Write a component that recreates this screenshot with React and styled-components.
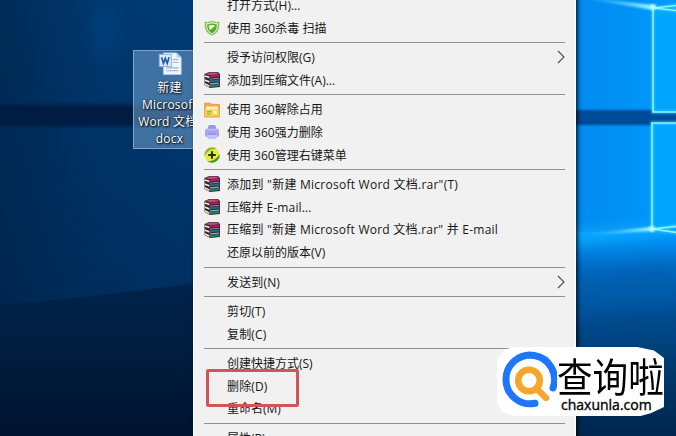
import React from 'react';
import styled, { createGlobalStyle } from 'styled-components';

const GlobalStyle = createGlobalStyle`
    body {
        margin: 0;
        overflow: hidden;
        font-family: "Open Sans", "Noto Sans CJK SC", sans-serif;
    }
`;

const Desktop = styled.div`
    position: relative;
    width: 676px;
    height: 436px;
    overflow: hidden;
    background: #002a5c;
`;

const WallpaperSvg = styled.svg`
    position: absolute;
    inset: 0;
`;

const FileIcon = styled.div`
    position: absolute;
    left: 133px;
    top: 50px;
    width: 73px;
    height: 99px;
    box-sizing: border-box;
    padding-top: 1px;
    display: flex;
    flex-direction: column;
    align-items: center;
    background: rgba(105, 154, 198, 0.6);
    border: 1px solid #7fa5c9;
`;

const FileName = styled.div`
    margin-top: 5px;
    color: #fff;
    font-size: 12px;
    line-height: 16.9px;
    letter-spacing: 0.2px;
    text-align: center;
    white-space: pre;
    text-shadow: 1px 1px 2px #000, 0 0 2px #0a2440;
`;

const Menu = styled.div`
    position: absolute;
    left: 193px;
    top: -10px;
    width: 383px;
    height: 460px;
    box-sizing: border-box;
    padding: 4px 9px 0 8px;
    background: #f1f1f1;
    border: solid #fafafa;
    border-width: 0 2px 0 1px;
    box-shadow: 2px 1px 4px rgba(0, 0, 0, 0.75);
`;

const MenuRow = styled.div`
    display: flex;
    align-items: center;
    height: 22.6px;
`;

const IconSlot = styled.div`
    width: 20px;
    height: 18px;
    margin-right: 5px;
    display: flex;
    align-items: center;
    justify-content: center;
    flex: none;
`;

const Label = styled.span`
    flex: 1;
    padding-top: 1.4px;
    color: #171717;
    font-size: 12px;
    line-height: 20px;
    letter-spacing: ${props => props.$spacing || '0'};
    white-space: pre;
`;

const Separator = styled.div`
    height: 7px;
    padding: 3px 0 3px 2px;
    box-sizing: border-box;

    &::before {
        content: '';
        display: block;
        height: 1px;
        background: #929292;
    }
`;

const Highlight = styled.div`
    position: absolute;
    left: 206px;
    top: 369px;
    width: 93px;
    height: 38px;
    box-sizing: border-box;
    border: 3px solid #d25459;
    border-radius: 2px;
`;

const Badge = styled.div`
    position: absolute;
    left: 497px;
    top: 347px;
    width: 167px;
    height: 69px;
    display: flex;
    background: #fff;
    clip-path: polygon(4% 5%, 9% 0, 84% 0, 94% 5%, 100% 16%, 100% 87%, 92% 96%, 86% 100%, 11% 100%, 3% 94%, 0 80%, 0 18%);
`;

const BadgeText = styled.div`
    display: flex;
    flex-direction: column;
    width: 107px;
    color: #000;
`;

const BadgeTitle = styled.div`
    height: 41px;
    margin-top: 8px;
    font-family: "Noto Sans CJK SC", sans-serif;
    font-size: 40px;
    font-weight: 400;
    line-height: 41px;
    white-space: nowrap;
    transform: scaleX(0.89);
    transform-origin: left center;
`;

const BadgeSite = styled.div`
    margin: 1px 0 0 4px;
    font-size: 14px;
    font-weight: 500;
    line-height: 16px;
    letter-spacing: 0;
    -webkit-text-stroke: 0.35px #000;
`;

function Wallpaper() {
    return (
        <WallpaperSvg width="676" height="436" viewBox="0 0 676 436">
            <defs>
                <linearGradient id="left" x1="0" y1="0" x2="1" y2="0">
                    <stop offset="0" stopColor="#002c58" />
                    <stop offset="0.5" stopColor="#00386e" />
                    <stop offset="1" stopColor="#003c77" />
                </linearGradient>
                <linearGradient id="leftFade" x1="0" y1="0" x2="0" y2="1">
                    <stop offset="0" stopColor="#001c40" stopOpacity="0" />
                    <stop offset="1" stopColor="#001c40" stopOpacity="0.4" />
                </linearGradient>
                <linearGradient id="floor" x1="0" y1="0" x2="0" y2="1">
                    <stop offset="0" stopColor="#00234b" />
                    <stop offset="1" stopColor="#001430" />
                </linearGradient>
                <linearGradient id="band" x1="0" y1="0" x2="0" y2="1">
                    <stop offset="0" stopColor="#001c43" stopOpacity="0" />
                    <stop offset="0.2" stopColor="#001c43" />
                    <stop offset="0.8" stopColor="#001c43" />
                    <stop offset="1" stopColor="#001c43" stopOpacity="0" />
                </linearGradient>
                <linearGradient id="sky" x1="0" y1="0" x2="1" y2="0">
                    <stop offset="0" stopColor="#008aee" />
                    <stop offset="1" stopColor="#0298fc" />
                </linearGradient>
                <linearGradient id="below" x1="0" y1="0" x2="0" y2="1">
                    <stop offset="0" stopColor="#009bff" />
                    <stop offset="0.07" stopColor="#0088ea" />
                    <stop offset="0.19" stopColor="#0067bd" />
                    <stop offset="0.42" stopColor="#004b8f" />
                    <stop offset="0.7" stopColor="#003768" />
                    <stop offset="1" stopColor="#002650" />
                </linearGradient>
                <linearGradient id="ray" x1="0" y1="0" x2="1" y2="0">
                    <stop offset="0" stopColor="#16a9ff" stopOpacity="0.2" />
                    <stop offset="1" stopColor="#9dfcff" />
                </linearGradient>
                <filter id="soft"><feGaussianBlur stdDeviation="1" /></filter>
                <filter id="haze" x="-1" y="-1" width="3" height="3"><feGaussianBlur stdDeviation="7" /></filter>
            </defs>
            <rect width="200" height="436" fill="url(#left)" />
            <rect width="200" height="305" fill="url(#leftFade)" />
            <ellipse cx="105" cy="30" rx="14" ry="30" fill="#005093" opacity="0.3" filter="url(#haze)" />
            <rect y="102" width="200" height="27" fill="url(#band)" />
            <path d="M0 305 L75 298 L200 283 V436 H0Z" fill="url(#floor)" />
            <rect x="570" width="106" height="240" fill="url(#sky)" />
            <rect x="560" y="110" width="130" height="15" fill="#004c97" filter="url(#soft)" />
            <rect x="570" y="232" width="106" height="204" fill="url(#below)" />
            <path d="M570 283 L676 258 V300 L570 320Z" fill="#005eac" opacity="0.35" filter="url(#haze)" />
            <path d="M570 231 L651 226 L676 232 L570 244Z" fill="#14b4ff" opacity="0.7" filter="url(#haze)" />
            <path d="M653 8 L676 5 V113 H653Z M652 123 H676 V228 L652 229Z" fill="#00a5ff" />
            <path d="M570 -4 L653 5 V10Z" fill="url(#ray)" filter="url(#soft)" />
            <path d="M570 236 L651 227 V231Z" fill="url(#ray)" filter="url(#soft)" />
            <path
                d="M680 5 L653 8 V112 H680 M680 123 H652 V229 L680 226 M652 229 L680 233 M653 8 L680 11"
                fill="none" stroke="#32cfff" strokeWidth="4" opacity="0.6" filter="url(#soft)"
            />
            <path
                d="M680 5 L653 8 V112 H680 M680 123 H652 V229 L680 226 M652 229 L680 233 M653 8 L680 11"
                fill="none" stroke="#8cf4f8" strokeWidth="1.6"
            />
            <circle cx="652" cy="229" r="3" fill="#c5ffff" filter="url(#soft)" />
            <circle cx="653" cy="7" r="3" fill="#c5ffff" filter="url(#soft)" />
        </WallpaperSvg>
    );
}

function WordIcon() {
    return (
        <svg width="26" height="25" viewBox="0 0 26 25">
            <path d="M6 1H20L25 6V24H6Z" fill="#eef5fd" stroke="#b9d0ea" strokeWidth="0.7" />
            <path d="M20 1V6H25Z" fill="#b9d1ec" />
            <path d="M16 8H22M16 11H22M9 17H22M9 20H22" stroke="#94b3db" strokeWidth="1.2" />
            <rect x="1.5" y="2.5" width="13" height="13" fill="#dceafb" stroke="#8db4e2" />
            <path d="M4 5.5L6 12.2L8 6.8L10 12.2L12 5.5" fill="none" stroke="#1f5cae" strokeWidth="1.8" />
        </svg>
    );
}

// three stacked books, spines to the right
function RarIcon() {
    return (
        <svg width="17" height="16" viewBox="0 0 17 16">
            <path d="M0.5 2L5 0H14L16 2V15L6 16L0.5 13Z" fill="#3a2430" />
            <path d="M1.5 2L5 .6H13.2L15 2.2L6 3.2Z" fill="#c14a78" />
            <path d="M6 3.6L15.5 2.8V4.8L6 5.6Z" fill="#a81f5c" />
            <path d="M6 8.2L15.5 7.4V9.4L6 10.4Z" fill="#28628f" />
            <path d="M6 6.8L15 6V6.8L6 7.6Z" fill="#8fb0cf" />
            <path d="M6 12.8L15.5 12V14.2L6 15.2Z" fill="#178069" />
            <path d="M6 11.6L15 10.6V11.4L6 12.4Z" fill="#8cc7b4" />
            <path d="M.8 3.2L5.4 4.6V6.3L.8 4.8ZM.8 7.2L5.4 9V10.7L.8 8.9ZM.8 11L5.4 13.2V14.9L.8 12.7Z" fill="#f3ece6" />
        </svg>
    );
}

function ShieldIcon() {
    return (
        <svg width="16" height="16" viewBox="0 0 16 16">
            <path d="M8 .5C10 2 13 2 15.3 1.8C15.8 8 14.5 13 8 15.6C1.5 13 .2 8 .7 1.8C3 2 6 2 8 .5Z" fill="#8cc45c" />
            <path d="M8 2C10 3 12 3.2 14 3.1C14 8.3 12.8 12 8 14.2C3.2 12 2 8.3 2 3.1C4 3.2 6 3 8 2Z" fill="#d8edaf" />
            <path d="M8 3.6L12.8 4.4C12.7 8.5 11.5 11.2 8 13.2C4.5 11.2 3.3 8.5 3.2 4.4Z" fill="#56a532" />
            <path d="M4.6 5.4L8 4.8L11 5.6C10.5 7.5 8 8 6.4 10C5.2 9 4.7 7.2 4.6 5.4Z" fill="#edf8d5" />
        </svg>
    );
}

function FolderIcon() {
    return (
        <svg width="16" height="16" viewBox="0 0 16 16">
            <path d="M.7 1.2H6.5L8 2.4H15.3V15H.7Z" fill="#f3a94e" stroke="#e0913e" strokeWidth="0.8" />
            <path d="M2 4.5H14V8H2Z" fill="#fff0b4" />
            <path d="M1 7.5H15V14.4H1Z" fill="#f0d24e" />
            <path d="M3 9.6H7.5M3 12H6.5" stroke="#8db53e" strokeWidth="1.2" />
            <path d="M9 8.6H13V12H9Z" fill="#fff3b0" />
        </svg>
    );
}

function ShredIcon() {
    return (
        <svg width="16" height="16" viewBox="0 0 16 16">
            <rect x="4" y="1" width="8" height="6" rx="2" fill="#9d98e4" />
            <rect x="1" y="4.5" width="14" height="8.5" rx="2.5" fill="#a8a2f2" />
            <path d="M2.5 5.8H13.5" stroke="#c6c3fb" />
            <rect x="3.5" y="10" width="9" height="5" rx="1" fill="#bdc7fb" />
            <path d="M4 10.2H12" stroke="#8880d8" />
        </svg>
    );
}

function PlusIcon() {
    return (
        <svg width="16" height="16" viewBox="0 0 16 16">
            <circle cx="8" cy="8" r="7.6" fill="#ece93f" />
            <path d="M.6 9A7.5 7.5 0 0 1 13 2.2C8 1 3 4 .6 9Z" fill="#7fbf35" />
            <path d="M15.4 7A7.5 7.5 0 0 1 3 13.8C8 15 13 12 15.4 7Z" fill="#419b22" />
            <path d="M8 4.2V11.8M4.2 8H11.8" stroke="#20390d" strokeWidth="2.1" />
        </svg>
    );
}

function Arrow() {
    return (
        <svg width="8" height="14" viewBox="0 0 8 14">
            <path d="M1 1L7 7L1 13" fill="none" stroke="#4c4c4c" strokeWidth="1.1" />
        </svg>
    );
}

function SearchLogo() {
    return (
        <svg width="60" height="69" viewBox="0 0 60 69">
            <path d="M56 41A24.3 24.3 0 1 0 38 56.3" fill="none" stroke="#1e77fb" strokeWidth="7" strokeLinecap="round" />
            <path d="M40 42L49 51" stroke="#f6a62b" strokeWidth="6.5" strokeLinecap="round" />
            <circle cx="32" cy="33.5" r="10.8" fill="#fff" stroke="#f6a62b" strokeWidth="6.6" />
        </svg>
    );
}

const groups = [
    [
        { text: '打开方式(H)...' },
        { text: '使用 360杀毒 扫描', icon: <ShieldIcon />, spacing: '0.08px' },
    ],
    [
        { text: '授予访问权限(G)', arrow: true },
        { text: '添加到压缩文件(A)...', icon: <RarIcon /> },
    ],
    [
        { text: '使用 360解除占用', icon: <FolderIcon /> },
        { text: '使用 360强力删除', icon: <ShredIcon /> },
        { text: '使用 360管理右键菜单', icon: <PlusIcon /> },
    ],
    [
        { text: '添加到 "新建 Microsoft Word 文档.rar"(T)', icon: <RarIcon />, spacing: '0.25px' },
        { text: '压缩并 E-mail...', icon: <RarIcon />, spacing: '0.12px' },
        { text: '压缩到 "新建 Microsoft Word 文档.rar" 并 E-mail', icon: <RarIcon />, spacing: '0.24px' },
        { text: '还原以前的版本(V)' },
    ],
    [{ text: '发送到(N)', arrow: true, spacing: '0.15px' }],
    [{ text: '剪切(T)', spacing: '0.15px' }, { text: '复制(C)', spacing: '0.15px' }],
    [{ text: '创建快捷方式(S)' }, { text: '删除(D)', spacing: '0.15px' }, { text: '重命名(M)' }],
    [{ text: '属性(R)' }],
];

function ContextMenu() {
    return (
        <Menu>
            {groups.map((group, i) => (
                <React.Fragment key={i}>
                    {i > 0 && <Separator />}
                    {group.map(item => (
                        <MenuRow key={item.text}>
                            <IconSlot>{item.icon}</IconSlot>
                            <Label $spacing={item.spacing}>{item.text}</Label>
                            {item.arrow && <Arrow />}
                        </MenuRow>
                    ))}
                </React.Fragment>
            ))}
        </Menu>
    );
}

function App() {
    return (
        <Desktop>
            <GlobalStyle />
            <Wallpaper />
            <FileIcon>
                <WordIcon />
                <FileName>{'新建\nMicrosoft\nWord 文档.\ndocx'}</FileName>
            </FileIcon>
            <ContextMenu />
            <Highlight />
            <Badge>
                <SearchLogo />
                <BadgeText>
                    <BadgeTitle>查询啦</BadgeTitle>
                    <BadgeSite>chaxunla.com</BadgeSite>
                </BadgeText>
            </Badge>
        </Desktop>
    );
}

export default App;
